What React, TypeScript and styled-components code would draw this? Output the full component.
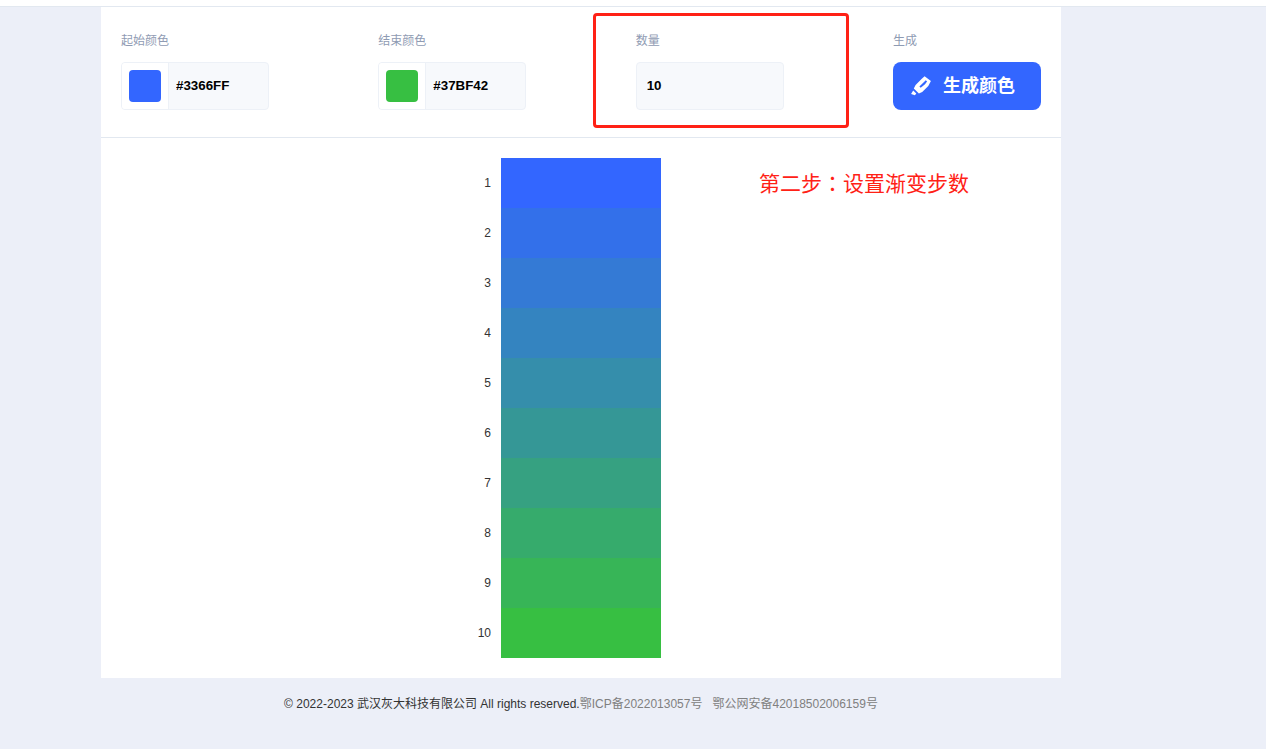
import React, { useState } from 'react';
import styled, { createGlobalStyle } from 'styled-components';

const GlobalStyle = createGlobalStyle`
  *, *::before, *::after { box-sizing: border-box; }
  body {
    margin: 0;
    background: #eceff8;
    color: #333;
    font: 12px/20px "Liberation Sans", "Noto Sans CJK SC", sans-serif;
  }
`;

const TopBar = styled.header`
  height: 7px;
  background: #fff;
  border-bottom: 1px solid #e2e8f0;
`;

const Page = styled.div`
  padding: 0 104px 36px 0;
`;

const Panel = styled.main`
  position: relative;
  max-width: 960px;
  margin: 0 auto;
  background: #fff;
`;

const Toolbar = styled.form`
  display: flex;
  justify-content: space-between;
  padding: 24px 20px 27px;
  border-bottom: 1px solid #e2e8f0;
`;

const Field = styled.div`
  position: relative;
  display: flex;
  flex-direction: column;
  gap: 11px;
  width: 148px;
`;

const Label = styled.label`
  color: #8f9bb3;
`;

const InputBox = styled.div`
  display: flex;
  height: 48px;
  overflow: hidden;
  border: 1px solid #edf1f7;
  border-radius: 4px;
  background: #f7f9fc;
`;

const SwatchCell = styled.span`
  display: flex;
  flex: none;
  align-items: center;
  justify-content: center;
  width: 47px;
  background: #fff;
  border-right: 1px solid #edf1f7;
`;

const Swatch = styled.span<{ $color: string }>`
  width: 32px;
  height: 32px;
  border-radius: 4px;
  background: ${(p) => p.$color};
`;

const TextInput = styled.input<{ $inset: number }>`
  flex: 1;
  min-width: 0;
  padding: 0 ${(p) => p.$inset}px 2px;
  border: 0;
  outline: 0;
  background: transparent;
  color: #000;
  font-family: "Liberation Sans", sans-serif;
  font-weight: 700;
`;

const GenerateButton = styled.button`
  display: flex;
  align-items: center;
  gap: 12px;
  height: 48px;
  padding: 0 18px;
  border: 0;
  border-radius: 8px;
  background: #3366ff;
  color: #fff;
  font: 700 18px/24px "Liberation Sans", "Noto Sans CJK SC", sans-serif;
  white-space: nowrap;
  cursor: pointer;
`;

const Highlight = styled.span`
  position: absolute;
  top: -18px;
  left: -43px;
  width: 256px;
  height: 115px;
  border: 3px solid #ff2116;
  border-radius: 4px;
  pointer-events: none;
`;

const Note = styled.p`
  position: absolute;
  top: 161px;
  left: 658px;
  margin: 0;
  color: #ff2116;
  font: 21px/28px "Noto Sans CJK TC", sans-serif;
  white-space: nowrap;
`;

const Steps = styled.ol`
  display: flex;
  flex-direction: column;
  align-items: center;
  margin: 0;
  padding: 20px;
  list-style: none;
`;

const Step = styled.li`
  display: grid;
  grid-template-columns: 40px 160px 40px;
  align-items: center;
  height: 50px;
`;

const StepNumber = styled.span`
  padding-right: 10px;
  text-align: right;
`;

const StepColor = styled.span<{ $color: string }>`
  height: 100%;
  background: ${(p) => p.$color};
`;

const Footer = styled.footer`
  padding: 16px 0;
  text-align: center;
`;

const FooterLink = styled.a`
  color: #808080;
  text-decoration: none;

  & + & {
    margin-left: 10px;
  }
`;

const parse = (hex: string) => [1, 3, 5].map((i) => parseInt(hex.slice(i, i + 2), 16));

const gradient = (from: string, to: string, count: number) => {
  const a = parse(from);
  const b = parse(to);
  return Array.from({ length: count }, (_, i) => {
    const t = count > 1 ? i / (count - 1) : 0;
    return `rgb(${a.map((v, c) => Math.round(v + (b[c] - v) * t)).join(', ')})`;
  });
};

const MarkerIcon = () => (
  <svg width="20" height="20" viewBox="0 0 20 20" fill="#fff" aria-hidden="true">
    <path
      fillRule="evenodd"
      d="M13.6.2 19.9 5 17.3 10 11.2 16 7.9 17.6 2.8 12.6 4.6 9 10.8 2.8ZM14.8 4.3 8.4 10.4 9.7 11.7 14 8.3 16.1 5.4Z"
    />
    <path d="M2.2 14.6 5.3 17.6 3.9 19.2.1 18Z" />
  </svg>
);

export default function App() {
  const [start, setStart] = useState('#3366FF');
  const [end, setEnd] = useState('#37BF42');
  const [count, setCount] = useState('10');
  const [colors, setColors] = useState(() => gradient('#3366FF', '#37BF42', 10));

  const generate = (event: React.FormEvent) => {
    event.preventDefault();
    setColors(gradient(start, end, Number(count) || 1));
  };

  return (
    <>
      <GlobalStyle />
      <TopBar />
      <Page>
        <Panel>
          <Toolbar onSubmit={generate}>
            <Field>
              <Label htmlFor="start">起始颜色</Label>
              <InputBox>
                <SwatchCell>
                  <Swatch $color={start} />
                </SwatchCell>
                <TextInput id="start" $inset={7} value={start} onChange={(e) => setStart(e.target.value)} />
              </InputBox>
            </Field>
            <Field>
              <Label htmlFor="end">结束颜色</Label>
              <InputBox>
                <SwatchCell>
                  <Swatch $color={end} />
                </SwatchCell>
                <TextInput id="end" $inset={7} value={end} onChange={(e) => setEnd(e.target.value)} />
              </InputBox>
            </Field>
            <Field>
              <Label htmlFor="count">数量</Label>
              <InputBox>
                <TextInput id="count" $inset={10} value={count} onChange={(e) => setCount(e.target.value)} />
              </InputBox>
              <Highlight />
            </Field>
            <Field>
              <Label htmlFor="generate">生成</Label>
              <GenerateButton id="generate" type="submit">
                <MarkerIcon />
                生成颜色
              </GenerateButton>
            </Field>
          </Toolbar>
          <Steps>
            {colors.map((color, i) => (
              <Step key={i}>
                <StepNumber>{i + 1}</StepNumber>
                <StepColor $color={color} />
              </Step>
            ))}
          </Steps>
          <Note>第二步：设置渐变步数</Note>
        </Panel>
        <Footer>
          © 2022-2023 武汉灰大科技有限公司 All rights reserved.
          <FooterLink href="#icp">鄂ICP备2022013057号</FooterLink>
          <FooterLink href="#police">鄂公网安备42018502006159号</FooterLink>
        </Footer>
      </Page>
    </>
  );
}
